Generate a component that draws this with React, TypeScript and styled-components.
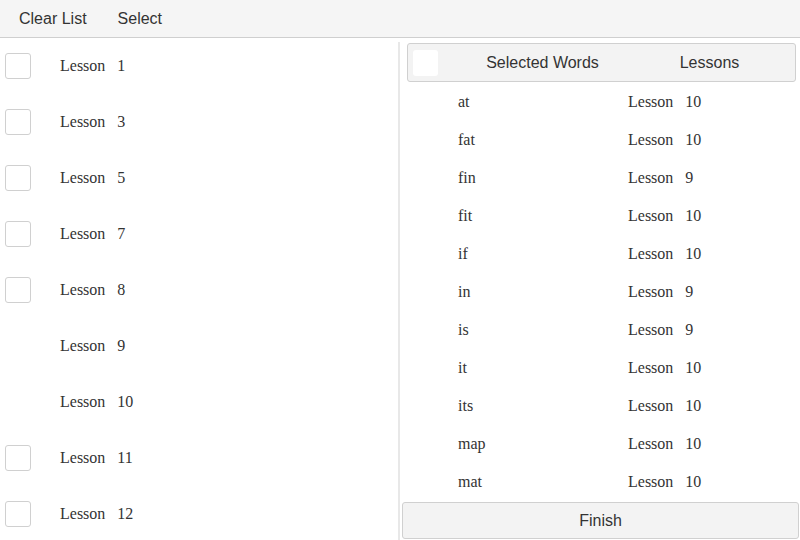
import React from 'react';
import styled, { createGlobalStyle } from 'styled-components';

const GlobalStyle = createGlobalStyle`
  html, body {
    margin: 0;
    padding: 0;
    background: #fff;
  }
  body {
    font-family: "Liberation Sans", Arial, sans-serif;
    font-size: 16px;
    color: #333;
  }
`;

const Page = styled.div`
  width: 800px;
  height: 540px;
  display: flex;
  flex-direction: column;
  overflow: hidden;
`;

const TopBar = styled.div`
  height: 37px;
  flex-shrink: 0;
  display: flex;
  align-items: center;
  gap: 31px;
  padding-left: 19px;
  background-color: #f5f5f5;
  border-bottom: 1px solid #cfcfcf;
`;

const BarButton = styled.span`
  font-size: 16px;
  color: #333;
  cursor: pointer;
`;

const Body = styled.div`
  flex: 1;
  display: flex;
  min-height: 0;
`;

const LessonList = styled.div`
  width: 398px;
  flex-shrink: 0;
`;

const LessonRow = styled.div`
  height: 56px;
  display: flex;
  align-items: center;
  padding-left: 5px;
`;

const CheckBox = styled.div<{ $hidden?: boolean }>`
  width: 26px;
  height: 26px;
  box-sizing: border-box;
  border: 1px solid ${(p) => (p.$hidden ? 'transparent' : '#d0d0d0')};
  border-radius: 3px;
  background: #fff;
  flex-shrink: 0;
`;

const SerifLabel = styled.span`
  font-family: "Liberation Serif", "Times New Roman", serif;
  font-size: 16px;
  color: #333;
  display: inline-flex;
  gap: 12px;
`;

const LessonLabel = styled(SerifLabel)`
  margin-left: 29px;
`;

const SelectedPanel = styled.div`
  flex: 1;
  margin-top: 4px;
  border-left: 2px solid #e8e8e8;
  display: flex;
  flex-direction: column;
`;

const TableHead = styled.div`
  height: 39px;
  flex-shrink: 0;
  box-sizing: border-box;
  margin: 1px 4px 0 7px;
  padding: 0 2px 0 5px;
  display: grid;
  grid-template-columns: 46px 167px 1fr;
  align-items: center;
  background-color: #f3f3f3;
  border: 1px solid #d0d0d0;
  border-radius: 3px;
`;

const HeadBox = styled.div`
  width: 25px;
  height: 26px;
  border-radius: 3px;
  background: #fff;
`;

const HeadCell = styled.div`
  text-align: center;
  font-size: 16px;
  color: #333;
`;

const WordRows = styled.div`
  flex: 1;
  margin: 1px 4px 0 7px;
`;

const WordRow = styled.div`
  height: 38px;
  display: grid;
  grid-template-columns: 51px 170px 1fr;
  align-items: center;
`;

const FinishButton = styled.div`
  height: 37px;
  flex-shrink: 0;
  box-sizing: border-box;
  margin: 1px 1px 1px 2px;
  display: flex;
  align-items: center;
  justify-content: center;
  background-color: #f3f3f3;
  border: 1px solid #d0d0d0;
  border-radius: 3px;
  font-size: 16px;
  color: #333;
`;

const lessons = [
  { n: 1, box: true },
  { n: 3, box: true },
  { n: 5, box: true },
  { n: 7, box: true },
  { n: 8, box: true },
  { n: 9, box: false },
  { n: 10, box: false },
  { n: 11, box: true },
  { n: 12, box: true },
];

const words: [string, number][] = [
  ['at', 10],
  ['fat', 10],
  ['fin', 9],
  ['fit', 10],
  ['if', 10],
  ['in', 9],
  ['is', 9],
  ['it', 10],
  ['its', 10],
  ['map', 10],
  ['mat', 10],
];

export default function App(): JSX.Element {
  return (
    <Page>
      <GlobalStyle />
      <TopBar>
        <BarButton>Clear List</BarButton>
        <BarButton>Select</BarButton>
      </TopBar>
      <Body>
        <LessonList>
          {lessons.map((l) => (
            <LessonRow key={l.n}>
              <CheckBox $hidden={!l.box} />
              <LessonLabel>
                <span>Lesson</span>
                <span>{l.n}</span>
              </LessonLabel>
            </LessonRow>
          ))}
        </LessonList>
        <SelectedPanel>
          <TableHead>
            <HeadBox />
            <HeadCell>Selected Words</HeadCell>
            <HeadCell>Lessons</HeadCell>
          </TableHead>
          <WordRows>
            {words.map(([w, n]) => (
              <WordRow key={w}>
                <span />
                <SerifLabel>{w}</SerifLabel>
                <SerifLabel>
                  <span>Lesson</span>
                  <span>{n}</span>
                </SerifLabel>
              </WordRow>
            ))}
          </WordRows>
          <FinishButton>Finish</FinishButton>
        </SelectedPanel>
      </Body>
    </Page>
  );
}
